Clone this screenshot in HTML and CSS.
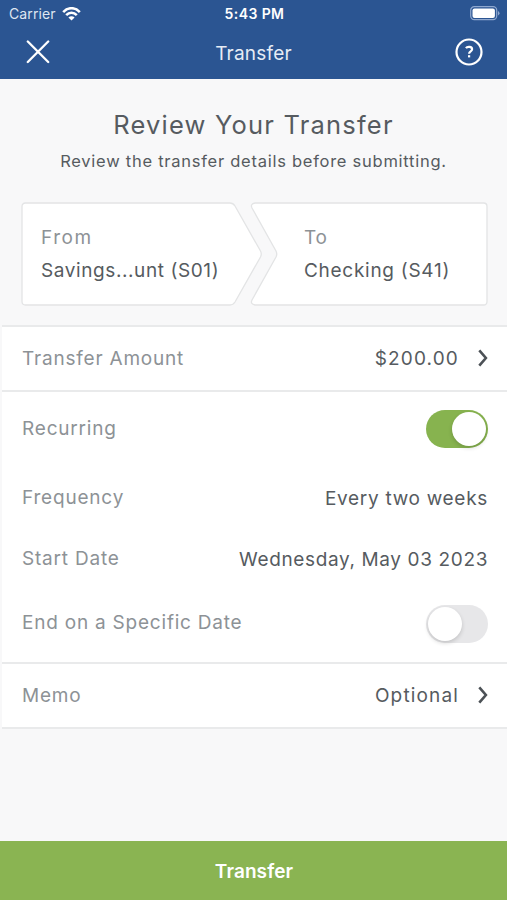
FILE: index.html
```html
<!DOCTYPE html>
<html lang="en">
<head>
<meta charset="utf-8">
<title>Transfer</title>
<link rel="stylesheet" href="styles.css">
</head>
<body>
<div class="screen">
  <header class="header">
    <div class="status">
      <div class="carrier"><span>Carrier</span>
        <svg width="19" height="14" viewBox="0 0 19 14" fill="none" stroke="#fff" stroke-width="2.6"><path d="M1.2 5.1C6-.1 13 -.1 17.800 5.100"/><path d="M4.200 8.200C7.300 5 11.700 5 14.800 8.200"/><path d="M9.500 13.600 6.400 10.400C8.200 8.800 10.800 8.800 12.600 10.400Z" fill="#fff" stroke="none"/></svg>
      </div>
      <div class="clock">5:43 PM</div>
      <svg class="battery" width="30" height="15" viewBox="0 0 30 15"><rect x=".7" y=".7" width="26" height="13" rx="3.600" fill="none" stroke="#8fa8cf" stroke-width="1.200"/><rect x="2.500" y="2.500" width="22.400" height="9.400" rx="2" fill="#fff"/><path d="M28 5v4.500q1.500-.7 1.500-2.200T28 5Z" fill="#8fa8cf"/></svg>
    </div>
    <div class="nav">
      <svg width="24" height="24" viewBox="0 0 24 24" fill="none" stroke="#fff" stroke-width="2.300" stroke-linecap="round"><path d="M1.800 1.500 22.200 22M22.200 1.500 1.800 22"/></svg>
      <h1 class="nav-title">Transfer</h1>
      <svg width="28" height="28" viewBox="0 0 28 28" fill="none" stroke="#fff" stroke-width="2.200"><circle cx="14" cy="14" r="12.500"/><path d="M10.900 10.200C12.300 8.300 17.100 8.400 17.100 11.300C17.100 13.400 14.100 13.300 14.100 15.700"/><path d="M14.100 17.200v2.200"/></svg>
    </div>
  </header>
  <main class="content">
    <h2 class="title">Review Your Transfer</h2>
    <p class="subtitle">Review the transfer details before submitting.</p>
    <section class="accounts">
      <svg class="accounts-shape" width="467" height="104" viewBox="0 0 467 104" fill="#fff" stroke="#e3e4e5" stroke-width="1.300"><path d="M4.500 1H209Q212 1 214 4L239.500 49Q241 52 239.500 55L214 100Q212 103 209 103H4.500Q1 103 1 99.500V4.500Q1 1 4.500 1Z"/><path d="M234 1H462.500Q466 1 466 4.500V99.500Q466 103 462.500 103H234Q229 102 231 98L255 55Q256.500 52 255 49L231 6Q229 2 234 1Z"/></svg>
      <div class="account"><span class="label from">From</span><span class="value savings">Savings...unt (S01)</span></div>
      <div class="account"><span class="label to">To</span><span class="value checking">Checking (S41)</span></div>
    </section>
    <section class="list">
      <div class="row link"><span class="label amount-label">Transfer Amount</span><span class="value amount">$200.00</span><svg class="chevron" width="10" height="18" viewBox="0 0 10 18"><path d="M1.300 1.300 7.900 9 1.300 16.700"/></svg></div>
      <div class="group">
        <div class="row recurring"><span class="label recurring-label">Recurring</span><span class="toggle on"></span></div>
        <div class="row frequency"><span class="label frequency-label">Frequency</span><span class="value weeks">Every two weeks</span></div>
        <div class="row start"><span class="label start-label">Start Date</span><span class="value date">Wednesday, May 03 2023</span></div>
        <div class="row end"><span class="label end-label">End on a Specific Date</span><span class="toggle"></span></div>
      </div>
      <div class="row link"><span class="label memo">Memo</span><span class="value optional">Optional</span><svg class="chevron" width="10" height="18" viewBox="0 0 10 18"><path d="M1.300 1.300 7.900 9 1.300 16.700"/></svg></div>
    </section>
  </main>
  <button class="submit">Transfer</button>
</div>
</body>
</html>
```
FILE: styles.css
```css
* { box-sizing: border-box; }
body { margin: 0; font-family: Inter, "Liberation Sans", sans-serif; color: #565b60; }
h1, h2, p { margin: 0; font-weight: 400; }
svg { display: block; flex: none; }
.screen { width: 507px; height: 900px; display: flex; flex-direction: column; background: #f8f8f9; overflow: hidden; white-space: nowrap; }
.header { height: 79px; background: #2b5592; color: #fff; }
.status { height: 27px; padding: 0 7px 0 9px; display: grid; grid-template-columns: 1fr auto 1fr; align-items: center; font-size: 14px; }
.carrier { display: flex; align-items: center; gap: 6px; color: #dfe6f1; letter-spacing: .1px; }
.clock { font-weight: 600; letter-spacing: .4px; }
.battery { justify-self: end; }
.nav { height: 50px; padding: 0 24px 0 26px; display: flex; align-items: center; justify-content: space-between; }
.nav-title { padding: 2px 0 0 2px; font-size: 19px; color: #e6ecf5; letter-spacing: .2px; }
.content { flex: 1; display: flex; flex-direction: column; }
.title { margin-top: 29px; height: 34px; line-height: 34px; font-size: 25.500px; letter-spacing: 1.200px; text-align: center; }
.subtitle { margin-top: 8px; height: 22px; line-height: 22px; font-size: 16.500px; letter-spacing: .740px; text-align: center; }
.accounts { position: relative; margin: 30px 19px 0 21px; height: 104px; display: grid; grid-template-columns: 263px 1fr; }
.accounts-shape { position: absolute; inset: 0; }
.account { position: relative; display: flex; flex-direction: column; padding: 23px 0 0 20px; }
.account span { height: 33px; line-height: 26px; }
.label, .value { font-size: 19px; letter-spacing: .8px; }
.label { color: #8d9296; }
.from { letter-spacing: 1.500px; }
.savings { letter-spacing: .590px; }
.checking { letter-spacing: .720px; }
.amount { letter-spacing: 1.150px; }
.weeks { letter-spacing: .700px; }
.date { letter-spacing: .630px; }
.end-label { letter-spacing: .780px; }
.optional { letter-spacing: 1.150px; }
.list { margin: 19px 0 0 2px; border-top: 2px solid #e9eaeb; border-bottom: 2px solid #e9eaeb; background: #fff; }
.row { display: flex; align-items: center; justify-content: space-between; padding: 0 19px 0 20px; }
.link { height: 63px; }
.link .value { margin-left: auto; margin-right: 19px; }
.group { height: 274px; border-top: 2px solid #e9eaeb; border-bottom: 2px solid #e9eaeb; }
.group .label { padding-bottom: 2px; }
.recurring { height: 74px; }
.frequency { height: 64px; }
.start { height: 58px; }
.end { height: 71px; }
.chevron { margin-bottom: 2px; fill: none; stroke: #4c5156; stroke-width: 2.600; }
.toggle { width: 62px; height: 38px; padding: 2px; border-radius: 19px; background: #e7e7e9; }
.toggle::after { content: ""; display: block; width: 34px; height: 34px; border-radius: 50%; background: #fff; box-shadow: 0 2px 4px rgba(0, 0, 0, .16); }
.toggle.on { background: #87b34f; }
.toggle.on::after { margin-left: auto; }
.submit { height: 59px; border: 0; padding: 2px 0 0 1px; background: #8ab452; color: #fff; font: 600 19px Inter, sans-serif; letter-spacing: .1px; }
```
